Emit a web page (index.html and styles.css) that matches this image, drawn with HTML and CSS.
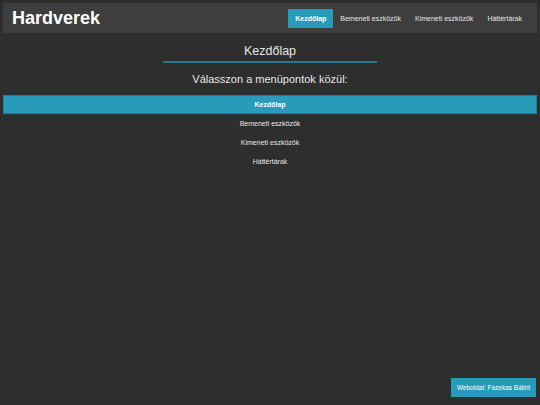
FILE: index.html
```html
<!DOCTYPE html>
<html lang="hu">
<head>
  <meta charset="UTF-8">
  <title>Hardverek</title>
  <link rel="stylesheet" href="styles.css">
</head>
<body>
  <div class="header">
    <div class="logo">Hardverek</div>
    <div class="nav">
      <a href="#" class="active">Kezdőlap</a>
      <a href="#">Bemeneti eszközök</a>
      <a href="#">Kimeneti eszközök</a>
      <a href="#">Háttértárak</a>
    </div>
  </div>

  <div class="content">
    <h1>Kezdőlap</h1>
    <h2>Válasszon a menüpontok közül:</h2>
    <div class="menu">
      <a href="#" class="active">Kezdőlap</a>
      <a href="#">Bemeneti eszközök</a>
      <a href="#">Kimeneti eszközök</a>
      <a href="#">Háttértárak</a>
    </div>
  </div>

  <div class="footer">Weboldal: Fazekas Bálint</div>
</body>
</html>
```

FILE: styles.css
```css
body {
  margin: 0;
  padding: 3px;
  background: #2e2e2e;
  color: #e6e6e6;
  font-family: "Liberation Sans", Arial, sans-serif;
}
a {
  color: #e6e6e6;
  text-decoration: none;
}
.header {
  display: flex;
  justify-content: space-between;
  align-items: center;
  height: 30px;
  padding: 0 8px 0 9px;
  background: #3e3e3e;
}
.logo {
  font-size: 18px;
  font-weight: bold;
  color: #fff;
}
.nav {
  display: flex;
  align-items: center;
}
.nav a {
  font-size: 7px;
  line-height: 19px;
  padding: 0 7px;
}
.nav a.active {
  background: #279bb9;
  color: #fff;
  font-weight: bold;
}
.content {
  text-align: center;
}
h1 {
  font-size: 12.5px;
  font-weight: normal;
  margin: 11px auto 0;
  width: 214px;
  padding-bottom: 3px;
  border-bottom: 2px solid #2a7588;
}
h2 {
  font-size: 11px;
  font-weight: normal;
  margin: 10px 0 10px;
}
.menu a {
  display: block;
  font-size: 7px;
  line-height: 19px;
}
.menu a.active {
  background: #279bb9;
  color: #fff;
  font-weight: bold;
  box-shadow: inset 0 0 0 1px #237f98;
}
.footer {
  position: fixed;
  right: 4px;
  bottom: 8px;
  width: 85px;
  line-height: 19px;
  text-align: center;
  font-size: 6.5px;
  background: #279bb9;
  color: #fff;
}
```
